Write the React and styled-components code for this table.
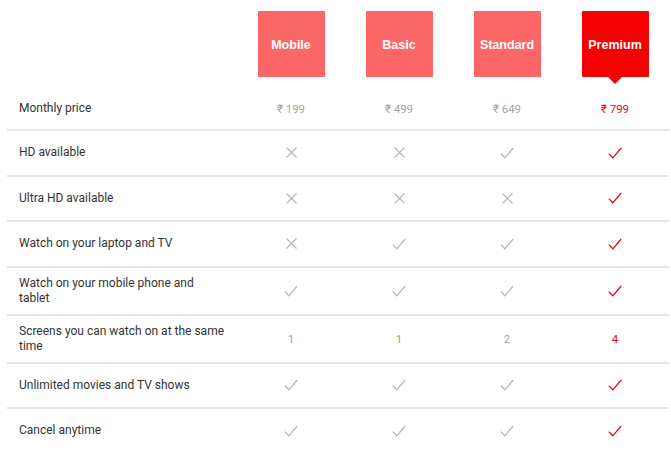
import styled, { createGlobalStyle } from 'styled-components'

const GlobalStyle = createGlobalStyle`
  html, body {
    margin: 0;
    padding: 0;
    background: #fff;
  }
  body {
    font-family: Roboto, "Liberation Sans", Arial, sans-serif;
    -webkit-font-smoothing: antialiased;
  }
`

const Table = styled.div`
  width: 662px;
  margin-left: 7px;
`

const Row = styled.div`
  display: grid;
  grid-template-columns: 230px repeat(4, 108px);
  align-items: center;
  min-height: 43.5px;
  border-bottom: ${props => (props.last ? 'none' : '2px solid #e6e6e6')};
`

const HeaderRow = styled.div`
  display: grid;
  grid-template-columns: 230px repeat(4, 108px);
  padding: 11px 0 11px;
`

const PriceRow = styled(Row)`
  min-height: 41px;
`

const Label = styled.div`
  padding: 8px 12px;
  font-size: 12px;
  line-height: 15px;
  color: #333;
  max-width: 207px;
`

const Cell = styled.div`
  display: flex;
  align-items: center;
  justify-content: center;
  font-size: 11.5px;
  color: ${props => (props.active ? '#e50914' : '#a3a3a3')};
`

const PlanBox = styled.div`
  position: relative;
  justify-self: center;
  width: 67px;
  height: 66px;
  padding-top: 2px;
  box-sizing: border-box;
  display: flex;
  align-items: center;
  justify-content: center;
  background: ${props => (props.active ? '#f50000' : '#fb6767')};
  color: #fff;
  font-family: "Liberation Sans", Arial, sans-serif;
  font-weight: 700;
  font-size: 12.5px;
  border-radius: 1px;

  &::after {
    content: '';
    display: ${props => (props.active ? 'block' : 'none')};
    position: absolute;
    left: 50%;
    top: 100%;
    transform: translateX(-50%);
    border-left: 7px solid transparent;
    border-right: 7px solid transparent;
    border-top: 7px solid #f50000;
  }
`

const Cross = () => (
  <svg width="11" height="11" viewBox="0 0 11 11">
    <path d="M0.5 0.5 L10.5 10.5 M10.5 0.5 L0.5 10.5" stroke="#b8b8b8" strokeWidth="1.2" fill="none" />
  </svg>
)

const Check = ({ active }) => (
  <svg width="14" height="12" viewBox="0 0 14 12">
    <path
      d="M0.8 6.6 L4.8 10.8 L13.2 1"
      stroke={active ? '#e50914' : '#b8b8b8'}
      strokeWidth="1.3"
      fill="none"
    />
  </svg>
)

const plans = ['Mobile', 'Basic', 'Standard', 'Premium']
const prices = ['₹ 199', '₹ 499', '₹ 649', '₹ 799']

const features = [
  { label: 'HD available', values: [false, false, true, true] },
  { label: 'Ultra HD available', values: [false, false, false, true] },
  { label: 'Watch on your laptop and TV', values: [false, true, true, true] },
  { label: 'Watch on your mobile phone and tablet', values: [true, true, true, true] },
  { label: 'Screens you can watch on at the same time', values: ['1', '1', '2', '4'] },
  { label: 'Unlimited movies and TV shows', values: [true, true, true, true] },
  { label: 'Cancel anytime', values: [true, true, true, true] },
]

const renderValue = (value, active) => {
  if (typeof value === 'string') return value
  return value ? <Check active={active} /> : <Cross />
}

export default function App() {
  return (
    <>
      <GlobalStyle />
      <Table>
        <HeaderRow>
          <div />
          {plans.map((plan, i) => (
            <PlanBox key={plan} active={i === 3}>{plan}</PlanBox>
          ))}
        </HeaderRow>
        <PriceRow>
          <Label>Monthly price</Label>
          {prices.map((price, i) => (
            <Cell key={price} active={i === 3}>{price}</Cell>
          ))}
        </PriceRow>
        {features.map((feature, r) => (
          <Row key={feature.label} last={r === features.length - 1}>
            <Label>{feature.label}</Label>
            {feature.values.map((value, i) => (
              <Cell key={i} active={i === 3}>{renderValue(value, i === 3)}</Cell>
            ))}
          </Row>
        ))}
      </Table>
    </>
  )
}
